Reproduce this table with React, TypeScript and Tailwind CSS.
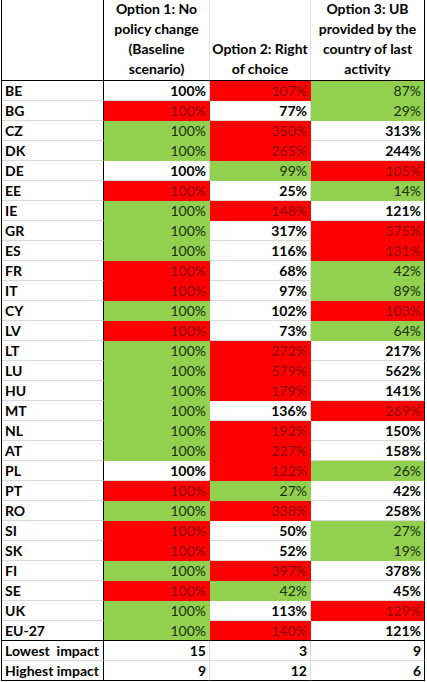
import React from 'react';

type Fill = 'R' | 'G' | 'W';

interface Row {
  label: string;
  cells: [string, Fill][];
}

const rows: Row[] = [
  { label: 'BE', cells: [['100%', 'W'], ['107%', 'R'], ['87%', 'G']] },
  { label: 'BG', cells: [['100%', 'R'], ['77%', 'W'], ['29%', 'G']] },
  { label: 'CZ', cells: [['100%', 'G'], ['350%', 'R'], ['313%', 'W']] },
  { label: 'DK', cells: [['100%', 'G'], ['265%', 'R'], ['244%', 'W']] },
  { label: 'DE', cells: [['100%', 'W'], ['99%', 'G'], ['105%', 'R']] },
  { label: 'EE', cells: [['100%', 'R'], ['25%', 'W'], ['14%', 'G']] },
  { label: 'IE', cells: [['100%', 'G'], ['148%', 'R'], ['121%', 'W']] },
  { label: 'GR', cells: [['100%', 'G'], ['317%', 'W'], ['375%', 'R']] },
  { label: 'ES', cells: [['100%', 'G'], ['116%', 'W'], ['131%', 'R']] },
  { label: 'FR', cells: [['100%', 'R'], ['68%', 'W'], ['42%', 'G']] },
  { label: 'IT', cells: [['100%', 'R'], ['97%', 'W'], ['89%', 'G']] },
  { label: 'CY', cells: [['100%', 'G'], ['102%', 'W'], ['103%', 'R']] },
  { label: 'LV', cells: [['100%', 'R'], ['73%', 'W'], ['64%', 'G']] },
  { label: 'LT', cells: [['100%', 'G'], ['272%', 'R'], ['217%', 'W']] },
  { label: 'LU', cells: [['100%', 'G'], ['579%', 'R'], ['562%', 'W']] },
  { label: 'HU', cells: [['100%', 'G'], ['179%', 'R'], ['141%', 'W']] },
  { label: 'MT', cells: [['100%', 'G'], ['136%', 'W'], ['269%', 'R']] },
  { label: 'NL', cells: [['100%', 'G'], ['192%', 'R'], ['150%', 'W']] },
  { label: 'AT', cells: [['100%', 'G'], ['227%', 'R'], ['158%', 'W']] },
  { label: 'PL', cells: [['100%', 'W'], ['122%', 'R'], ['26%', 'G']] },
  { label: 'PT', cells: [['100%', 'R'], ['27%', 'G'], ['42%', 'W']] },
  { label: 'RO', cells: [['100%', 'G'], ['338%', 'R'], ['258%', 'W']] },
  { label: 'SI', cells: [['100%', 'R'], ['50%', 'W'], ['27%', 'G']] },
  { label: 'SK', cells: [['100%', 'R'], ['52%', 'W'], ['19%', 'G']] },
  { label: 'FI', cells: [['100%', 'G'], ['397%', 'R'], ['378%', 'W']] },
  { label: 'SE', cells: [['100%', 'R'], ['42%', 'G'], ['45%', 'W']] },
  { label: 'UK', cells: [['100%', 'G'], ['113%', 'W'], ['129%', 'R']] },
  { label: 'EU-27', cells: [['100%', 'G'], ['140%', 'R'], ['121%', 'W']] },
];

const footer: Row[] = [
  { label: 'Lowest  impact', cells: [['15', 'W'], ['3', 'W'], ['9', 'W']] },
  { label: 'Highest impact', cells: [['9', 'W'], ['12', 'W'], ['6', 'W']] },
];

const widths = ['w-[106px]', 'w-[101px]', 'w-[114px]'];

function fillClass(f: Fill, col: number, bottom: string) {
  const right =
    col === 2 ? 'border-r-black' : f === 'R' ? 'border-r-[#ff0000]' : f === 'G' ? 'border-r-[#92d050]' : 'border-r-[#d9d9d9]';
  const bg =
    f === 'R'
      ? 'bg-[#ff0000] text-[#8c0000] font-normal'
      : f === 'G'
      ? 'bg-[#92d050] text-[#1a2e0c] font-normal'
      : 'bg-white text-black font-bold';
  const b =
    bottom !== ''
      ? bottom
      : f === 'R'
      ? 'border-b-[#ff0000]'
      : f === 'G'
      ? 'border-b-[#92d050]'
      : 'border-b-[#d9d9d9]';
  return `${bg} ${right} ${b}`;
}

function TableRow({ row, bottom }: { row: Row; bottom: string }) {
  return (
    <div className="flex h-[20px]">
      <div
        className={`w-[102px] shrink-0 border-r border-b border-r-black ${
          bottom !== '' ? bottom : 'border-b-[#d9d9d9]'
        } pl-[3px] font-bold leading-[19px] whitespace-pre`}
      >
        {row.label}
      </div>
      {row.cells.map(([v, f], i) => (
        <div
          key={i}
          className={`${widths[i]} shrink-0 border-r border-b text-right pr-[3px] leading-[19px] ${fillClass(f, i, bottom)}`}
        >
          {v}
        </div>
      ))}
    </div>
  );
}

export default function App() {
  const headers = [
    ['Option 1: No', 'policy change', '(Baseline', 'scenario)'],
    ['Option 2: Right', 'of choice'],
    ['Option 3: UB', 'provided by the', 'country of last', 'activity'],
  ];
  return (
    <div className="bg-white w-[427px] h-[682px] overflow-hidden">
      <div
        className="ml-px w-[424px] border-l border-black text-[14px] text-black"
        style={{ fontFamily: 'Lato, "Liberation Sans", sans-serif' }}
      >
        <div className="flex h-[81px] border-b border-black">
          <div className="w-[102px] shrink-0 border-r border-black" />
          {headers.map((lines, i) => (
            <div
              key={i}
              className={`${widths[i]} shrink-0 border-r ${
                i === 2 ? 'border-black' : 'border-[#e4e4e4]'
              } flex flex-col justify-end items-center font-bold leading-[20px] pb-px`}
            >
              {lines.map((l) => (
                <div key={l} className="whitespace-nowrap">
                  {l}
                </div>
              ))}
            </div>
          ))}
        </div>
        {rows.map((r, idx) => (
          <TableRow key={r.label} row={r} bottom={idx === rows.length - 1 ? 'border-b-black' : ''} />
        ))}
        {footer.map((r, idx) => (
          <TableRow key={r.label} row={r} bottom={idx === footer.length - 1 ? 'border-b-black' : 'border-b-[#d9d9d9]'} />
        ))}
      </div>
    </div>
  );
}
